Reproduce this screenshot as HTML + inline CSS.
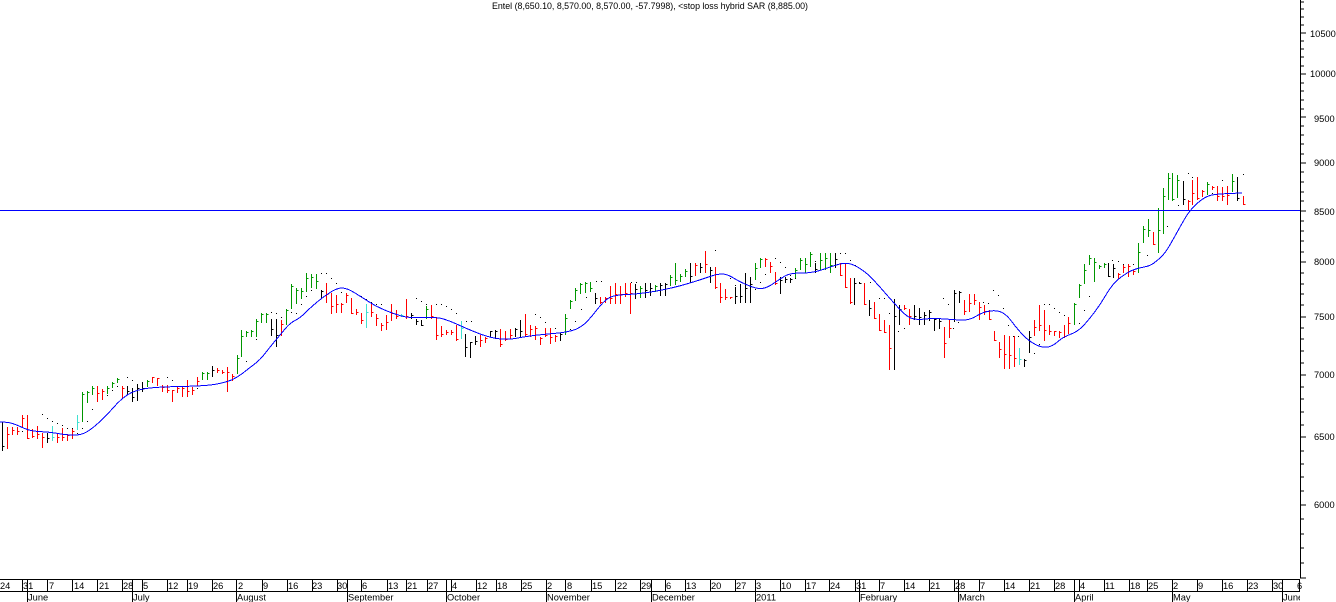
<!DOCTYPE html>
<html><head><meta charset="utf-8"><style>
html,body{margin:0;padding:0;background:#fff;width:1336px;height:602px;overflow:hidden}
svg{display:block}
text{font-family:"Liberation Sans",Arial,sans-serif;font-size:9.3px;fill:#000}
.b{fill:none;stroke-width:1;shape-rendering:crispEdges}
</style></head><body>
<svg width="1336" height="602" viewBox="0 0 1336 602" xmlns="http://www.w3.org/2000/svg">
<rect width="1336" height="602" fill="#fff"/>
<text x="492" y="9" font-size="9.3" textLength="316" lengthAdjust="spacingAndGlyphs">Entel (8,650.10, 8,570.00, 8,570.00, -57.7998), &lt;stop loss hybrid SAR (8,885.00)</text>
<path class="b" transform="translate(-.5,.5)" stroke="#000" d="M122.5 386h1M117.5 386h1M112.5 390h1M107.5 395h1M42.5 414h1M47.5 418h1M52.5 421h1M57.5 423h1M62.5 425h1M67.5 428h1M72.5 428h1M77.5 433h1M82.5 428h1M87.5 421h1M92.5 409h1M22.5 431h1M127.5 377h1M132.5 380h1M137.5 384h1M167.5 377h1M172.5 380h1M197.5 388h1M202.5 385h1M212.5 376h1M246.5 361h1M256.5 339h1M271.5 312h1M276.5 313h1M281.5 317h1M291.5 312h1M296.5 313h1M301.5 304h1M306.5 296h1M311.5 290h1M321.5 273h1M326.5 273h1M331.5 278h1M336.5 283h1M341.5 292h1M346.5 299h1M361.5 296h1M366.5 299h1M371.5 302h1M376.5 304h1M381.5 304h1M391.5 320h1M416.5 298h1M421.5 301h1M426.5 304h1M436.5 304h1M441.5 304h1M446.5 306h1M451.5 309h1M456.5 313h1M466.5 321h1M471.5 321h1M535.5 314h1M540.5 317h1M545.5 322h1M555.5 328h1M570.5 329h1M575.5 321h1M581.5 309h1M586.5 297h1M596.5 281h1M601.5 281h1M631.5 282h1M636.5 282h1M675.5 280h1M715.5 250h1M730.5 278h1M735.5 285h1M740.5 288h1M755.5 289h1M760.5 282h1M765.5 274h1M775.5 258h1M780.5 262h1M785.5 267h1M790.5 275h1M795.5 278h1M805.5 272h1M810.5 264h1M815.5 261h1M840.5 253h1M845.5 253h1M850.5 260h1M855.5 265h1M870.5 282h1M879.5 298h1M884.5 298h1M889.5 313h1M894.5 315h1M898.5 331h1M904.5 328h1M943.5 298h1M948.5 304h1M953.5 328h1M958.5 322h1M983.5 302h1M988.5 303h1M993.5 290h1M998.5 295h1M1003.5 308h1M1008.5 325h1M1013.5 336h1M1018.5 336h1M1024.5 336h1M1034.5 353h1M1039.5 344h1M1044.5 304h1M1049.5 304h1M1054.5 308h1M1059.5 312h1M1064.5 315h1M1079.5 323h1M1084.5 310h1M1089.5 296h1M1094.5 281h1M1112.5 260h1M1118.5 261h1M1123.5 264h1M1128.5 264h1M1133.5 264h1M1147.5 255h1M1167.5 226h1M1178.5 205h1M1183.5 200h1M1188.5 173h1M1192.5 177h1M1212.5 193h1M1217.5 199h1M1222.5 180h1M1237.5 199h1M1243.5 174h1"/>
<path class="b" stroke="#009600" d="M82.5 392V422M82.5 394.5h2M87.5 391V403M87.5 392.5h2M92.5 386V395M92.5 388.5h2M107.5 386V394M107.5 388.5h2M112.5 382V388M112.5 383.5h2M117.5 378V383M117.5 379.5h2M147.5 380V387M147.5 381.5h2M202.5 372V380M202.5 373.5h2M207.5 372V380M207.5 373.5h2M237.5 355V374M237.5 358.5h2M241.5 330V357M241.5 336.5h2M246.5 331V337M246.5 332.5h2M251.5 330V337M251.5 331.5h2M256.5 319V337M256.5 321.5h2M261.5 313V323M261.5 314.5h2M266.5 313V323M266.5 314.5h2M286.5 309V325M286.5 310.5h2M291.5 284V309M291.5 286.5h2M296.5 288V304M296.5 290.5h2M301.5 288V299M301.5 291.5h2M306.5 273V292M306.5 278.5h2M311.5 274V288M311.5 277.5h2M316.5 274V289M316.5 281.5h2M426.5 306V319M426.5 309.5h2M565.5 314V335M565.5 318.5h2M570.5 300V309M570.5 301.5h2M575.5 288V301M575.5 290.5h2M580.5 283V294M580.5 284.5h2M585.5 282V293M585.5 283.5h2M590.5 282V292M590.5 288.5h2M640.5 286V298M640.5 288.5h2M655.5 285V292M655.5 286.5h2M670.5 275V286M670.5 277.5h2M675.5 263V285M675.5 280.5h2M680.5 274V282M680.5 276.5h2M685.5 269V277M685.5 271.5h2M755.5 263V280M755.5 268.5h2M760.5 258V268M760.5 259.5h2M795.5 268V278M795.5 270.5h2M800.5 258V270M800.5 260.5h2M805.5 258V273M805.5 264.5h2M810.5 252V267M810.5 254.5h2M820.5 253V270M820.5 260.5h2M825.5 253V270M825.5 258.5h2M830.5 253V273M830.5 265.5h2M1074.5 303V325M1074.5 304.5h2M1079.5 284V298M1079.5 285.5h2M1084.5 264V284M1084.5 270.5h2M1089.5 255V265M1089.5 258.5h2M1094.5 258V282M1094.5 262.5h2M1099.5 265V269M1099.5 266.5h2M1104.5 263V268M1104.5 264.5h2M1138.5 243V273M1138.5 252.5h2M1143.5 226V243M1143.5 229.5h2M1148.5 219V237M1148.5 230.5h2M1158.5 208V253M1158.5 230.5h2M1163.5 188V234M1163.5 196.5h2M1168.5 173V200M1168.5 178.5h2M1172.5 173V201M1172.5 199.5h2M1177.5 175V198M1177.5 180.5h2M1207.5 182V195M1207.5 184.5h2M1232.5 174V192M1232.5 181.5h2"/>
<path class="b" stroke="#f00" d="M7.5 427V449M7.5 434.5h2M12.5 427V435M12.5 430.5h2M17.5 427V435M17.5 431.5h2M22.5 415V428M22.5 418.5h2M27.5 415V439M27.5 438.5h2M32.5 429V438M32.5 436.5h2M37.5 426V439M37.5 434.5h2M42.5 433V448M42.5 437.5h2M57.5 433V443M57.5 437.5h2M62.5 428V441M62.5 437.5h2M67.5 434V441M67.5 435.5h2M72.5 429V439M72.5 431.5h2M97.5 386V402M97.5 393.5h2M102.5 389V400M102.5 391.5h2M122.5 386V399M122.5 388.5h2M152.5 377V383M152.5 377.5h2M157.5 378V386M157.5 378.5h2M162.5 385V392M162.5 387.5h2M167.5 385V393M167.5 390.5h2M172.5 390V402M172.5 390.5h2M177.5 386V393M177.5 388.5h2M182.5 386V397M182.5 388.5h2M187.5 380V397M187.5 391.5h2M192.5 387V395M192.5 390.5h2M197.5 377V386M197.5 381.5h2M217.5 368V373M217.5 370.5h2M222.5 370V374M222.5 372.5h2M227.5 367V392M227.5 372.5h2M232.5 374V381M232.5 376.5h2M281.5 320V336M281.5 324.5h2M326.5 283V303M326.5 294.5h2M331.5 293V314M331.5 306.5h2M336.5 295V313M336.5 304.5h2M341.5 303V313M341.5 304.5h2M346.5 293V303M346.5 295.5h2M351.5 298V314M351.5 313.5h2M356.5 309V315M356.5 312.5h2M361.5 313V324M361.5 320.5h2M371.5 304V317M371.5 312.5h2M376.5 314V326M376.5 318.5h2M381.5 323V331M381.5 325.5h2M386.5 315V330M386.5 322.5h2M391.5 304V321M391.5 313.5h2M396.5 310V319M396.5 316.5h2M406.5 299V319M406.5 316.5h2M431.5 305V319M431.5 316.5h2M436.5 317V340M436.5 335.5h2M441.5 326V337M441.5 334.5h2M446.5 330V335M446.5 332.5h2M451.5 330V335M451.5 332.5h2M456.5 325V341M456.5 339.5h2M480.5 335V347M480.5 340.5h2M485.5 337V343M485.5 338.5h2M500.5 329V347M500.5 344.5h2M505.5 331V341M505.5 339.5h2M510.5 329V339M510.5 335.5h2M525.5 314V337M525.5 334.5h2M530.5 325V337M530.5 329.5h2M535.5 326V340M535.5 328.5h2M540.5 337V345M540.5 338.5h2M545.5 328V337M545.5 335.5h2M550.5 328V344M550.5 337.5h2M555.5 335V342M555.5 336.5h2M600.5 297V304M600.5 302.5h2M605.5 297V303M605.5 298.5h2M610.5 286V304M610.5 298.5h2M615.5 283V304M615.5 294.5h2M620.5 286V304M620.5 294.5h2M625.5 283V297M625.5 293.5h2M630.5 283V314M630.5 293.5h2M695.5 263V276M695.5 265.5h2M705.5 251V273M705.5 264.5h2M715.5 267V289M715.5 287.5h2M720.5 283V303M720.5 297.5h2M725.5 289V300M725.5 297.5h2M730.5 297V299M730.5 297.5h2M765.5 258V267M765.5 259.5h2M770.5 262V273M770.5 266.5h2M775.5 272V285M775.5 283.5h2M840.5 263V276M840.5 275.5h2M845.5 263V288M845.5 287.5h2M850.5 278V304M850.5 302.5h2M864.5 283V305M864.5 304.5h2M874.5 302V319M874.5 318.5h2M879.5 314V331M879.5 330.5h2M884.5 320V333M884.5 332.5h2M889.5 325V370M889.5 348.5h2M904.5 305V310M904.5 308.5h2M909.5 309V325M909.5 316.5h2M944.5 327V358M944.5 343.5h2M949.5 319V338M949.5 328.5h2M964.5 300V315M964.5 311.5h2M969.5 294V312M969.5 303.5h2M974.5 294V305M974.5 300.5h2M979.5 302V320M979.5 307.5h2M984.5 305V315M984.5 311.5h2M989.5 310V320M989.5 319.5h2M994.5 331V341M994.5 340.5h2M999.5 342V358M999.5 349.5h2M1004.5 335V369M1004.5 354.5h2M1009.5 336V369M1009.5 355.5h2M1014.5 336V367M1014.5 358.5h2M1034.5 320V336M1034.5 327.5h2M1039.5 305V331M1039.5 325.5h2M1044.5 310V341M1044.5 330.5h2M1049.5 325V335M1049.5 331.5h2M1054.5 331V336M1054.5 331.5h2M1059.5 331V338M1059.5 332.5h2M1064.5 325V338M1064.5 336.5h2M1068.5 317V334M1068.5 323.5h2M1118.5 273V279M1118.5 274.5h2M1123.5 265V273M1123.5 267.5h2M1128.5 264V277M1128.5 266.5h2M1133.5 270V275M1133.5 271.5h2M1153.5 232V245M1153.5 244.5h2M1188.5 200V210M1188.5 201.5h2M1192.5 180V205M1192.5 193.5h2M1197.5 177V200M1197.5 198.5h2M1202.5 190V197M1202.5 191.5h2M1212.5 186V190M1212.5 187.5h2M1217.5 186V201M1217.5 196.5h2M1222.5 187V201M1222.5 196.5h2M1227.5 186V205M1227.5 195.5h2M1243.5 196V205M1243.5 204.5h2"/>
<path class="b" stroke="#000" d="M2.5 422V451M2.5 446.5h2M47.5 433V443M47.5 438.5h2M127.5 386V395M127.5 391.5h2M132.5 388V402M132.5 397.5h2M137.5 384V401M137.5 388.5h2M142.5 382V392M142.5 388.5h2M212.5 366V377M212.5 370.5h2M271.5 319V336M271.5 329.5h2M276.5 319V347M276.5 335.5h2M321.5 290V299M321.5 291.5h2M411.5 313V319M411.5 315.5h2M416.5 319V325M416.5 321.5h2M421.5 320V326M421.5 325.5h2M465.5 334V357M465.5 347.5h2M470.5 342V358M470.5 342.5h2M475.5 336V345M475.5 341.5h2M490.5 331V337M490.5 331.5h2M495.5 330V339M495.5 331.5h2M515.5 328V337M515.5 329.5h2M520.5 320V337M520.5 331.5h2M560.5 333V341M560.5 334.5h2M595.5 293V304M595.5 298.5h2M635.5 284V299M635.5 289.5h2M645.5 283V298M645.5 290.5h2M650.5 283V296M650.5 288.5h2M660.5 283V296M660.5 285.5h2M665.5 283V296M665.5 284.5h2M690.5 263V283M690.5 276.5h2M700.5 263V273M700.5 267.5h2M710.5 267V283M710.5 270.5h2M735.5 287V304M735.5 296.5h2M740.5 284V303M740.5 296.5h2M745.5 273V303M745.5 288.5h2M750.5 277V303M750.5 284.5h2M780.5 277V294M780.5 280.5h2M785.5 277V283M785.5 279.5h2M790.5 278V283M790.5 279.5h2M815.5 263V273M815.5 269.5h2M835.5 253V268M835.5 259.5h2M854.5 278V305M854.5 283.5h2M859.5 282V284M859.5 283.5h2M869.5 300V316M869.5 308.5h2M894.5 299V370M894.5 316.5h2M899.5 305V325M899.5 309.5h2M914.5 305V320M914.5 316.5h2M919.5 308V325M919.5 317.5h2M924.5 312V325M924.5 315.5h2M929.5 310V321M929.5 312.5h2M934.5 318V331M934.5 319.5h2M939.5 319V329M939.5 321.5h2M954.5 290V322M954.5 293.5h2M959.5 291V303M959.5 292.5h2M1024.5 359V367M1024.5 360.5h2M1029.5 331V353M1029.5 337.5h2M1108.5 263V277M1108.5 276.5h2M1113.5 264V278M1113.5 268.5h2M1183.5 181V205M1183.5 199.5h2M1237.5 177V201M1237.5 198.5h2"/>
<path class="b" stroke="#40e0d0" d="M52.5 426V441M52.5 437.5h2M77.5 415V430M77.5 422.5h2M366.5 304V328M366.5 312.5h2M401.5 314V317M401.5 315.5h2M461.5 321V339M461.5 328.5h2M1019.5 348V365M1019.5 359.5h2"/>
<path class="b" stroke="#0000ff" d="M0 422Q8 422 12.5 423.5Q17 425 23.5 428Q30 431 38.5 431.5Q47 432 51 432.5Q55 433 61 434Q67 435 74.5 435Q82 435 87.5 431.5Q93 428 100 421.5Q107 415 113.5 407.5Q120 400 126.5 395.5Q133 391 143 389Q153 387 180 386.5Q207 386 217 384Q227 382 232.5 379.5Q238 377 243 373Q248 369 254 364.5Q260 360 265 353.5Q270 347 275 341Q280 335 285 329Q290 323 295 320.5Q300 318 305 313Q310 308 316.5 302.5Q323 297 330 292.5Q337 288 342 288Q347 288 355 293Q363 298 370 302.5Q377 307 387 311Q397 315 403.5 316.5Q410 318 423.5 317.5Q437 317 443.5 319Q450 321 456.5 324Q463 327 475 332Q487 337 497 338.5Q507 340 515 338.5Q523 337 530 336Q537 335 553.5 333.5Q570 332 576.5 329Q583 326 588 320.5Q593 315 598 308.5Q603 302 608 298.5Q613 295 626.5 294.5Q640 294 656.5 291Q673 288 686.5 284Q700 280 708.5 277Q717 274 722 274Q727 274 733.5 278Q740 282 748.5 285.5Q757 289 762 288.5Q767 288 773.5 283.5Q780 279 785 276Q790 273 801.5 273Q813 273 823 269.5Q833 266 838 264.5Q843 263 848 263.5Q853 264 860 268.5Q867 273 873.5 280Q880 287 886.5 294.5Q893 302 900 309.5Q907 317 912 318.5Q917 320 925 319Q933 318 945 319Q957 320 963.5 320Q970 320 976.5 316Q983 312 990 311Q997 310 1002 312.5Q1007 315 1012.5 322.5Q1018 330 1024 336Q1030 342 1036.5 345Q1043 348 1048 347Q1053 346 1058 341.5Q1063 337 1070 334.5Q1077 332 1082 327Q1087 322 1093.5 313.5Q1100 305 1106.5 294Q1113 283 1120.5 277.5Q1128 272 1133 270Q1138 268 1144 267Q1150 266 1154 263Q1158 260 1161.5 256.5Q1165 253 1167.5 249Q1170 245 1175 236Q1180 227 1184 220Q1188 213 1192.5 208Q1197 203 1202 199.5Q1207 196 1212 195Q1217 194 1229.5 193.5L1242 193"/>
<path class="b" stroke="#0000ff" d="M0 210.5H1300"/>
<path class="b" stroke="#000" stroke-width="1" d="M0 579.5H1300M0 591.5H1300M1300.5 0V578M1300 578H1306M1300 2H1304M1300 9H1304M1300 17H1304M1300 25H1304M1300 33H1306M1300 41H1304M1300 49H1304M1300 57H1304M1300 66H1304M1300 74H1306M1300 83H1304M1300 91H1304M1300 100H1304M1300 109H1304M1300 117H1306M1300 126H1304M1300 135H1304M1300 144H1304M1300 154H1304M1300 163H1306M1300 172H1304M1300 182H1304M1300 192H1304M1300 201H1304M1300 211H1306M1300 221H1304M1300 231H1304M1300 241H1304M1300 252H1304M1300 262H1306M1300 273H1304M1300 284H1304M1300 294H1304M1300 305H1304M1300 317H1306M1300 328H1304M1300 339H1304M1300 351H1304M1300 363H1304M1300 375H1306M1300 387H1304M1300 399H1304M1300 412H1304M1300 425H1304M1300 437H1306M1300 451H1304M1300 464H1304M1300 477H1304M1300 491H1304M1300 505H1306M1300 519H1304M1300 534H1304M1300 548H1304M1300 563H1304"/>
<path class="b" stroke="#000" d="M22.5 579V591M27.5 579V602M47.5 579V591M72.5 579V591M97.5 579V591M122.5 579V591M132.5 579V602M142.5 579V591M167.5 579V591M187.5 579V591M212.5 579V591M236.5 579V602M262.5 579V591M287.5 579V591M312.5 579V591M337.5 579V591M347.5 579V602M361.5 579V591M387.5 579V591M406.5 579V591M427.5 579V591M446.5 579V602M451.5 579V591M476.5 579V591M496.5 579V591M521.5 579V591M546.5 579V602M565.5 579V591M591.5 579V591M615.5 579V591M640.5 579V591M651.5 579V602M665.5 579V591M685.5 579V591M710.5 579V591M735.5 579V591M755.5 579V602M780.5 579V591M805.5 579V591M829.5 579V591M855.5 579V591M859.5 579V602M879.5 579V591M904.5 579V591M929.5 579V591M954.5 579V591M958.5 579V602M979.5 579V591M1004.5 579V591M1029.5 579V591M1054.5 579V591M1074.5 579V602M1079.5 579V591M1104.5 579V591M1129.5 579V591M1147.5 579V591M1172.5 579V602M1197.5 579V591M1222.5 579V591M1247.5 579V591M1272.5 579V591M1282.5 579V602M1299.5 579V591"/>
<g>
<text x="1310" y="37">10500</text><text x="1310" y="77">10000</text><text x="1314" y="122">9500</text><text x="1314" y="166">9000</text><text x="1314" y="215">8500</text><text x="1314" y="265">8000</text><text x="1314" y="320">7500</text><text x="1314" y="378">7000</text><text x="1314" y="440">6500</text><text x="1314" y="508">6000</text>
</g>
<g>
<text x="0" y="589">24</text><text x="23" y="589">31</text><text x="49" y="589">7</text><text x="74" y="589">14</text><text x="99" y="589">21</text><text x="123" y="589">28</text><text x="143" y="589">5</text><text x="168" y="589">12</text><text x="188" y="589">19</text><text x="213" y="589">26</text><text x="238" y="589">2</text><text x="263" y="589">9</text><text x="288" y="589">16</text><text x="312" y="589">23</text><text x="337" y="589">30</text><text x="362" y="589">6</text><text x="388" y="589">13</text><text x="407" y="589">21</text><text x="428" y="589">27</text><text x="452" y="589">4</text><text x="477" y="589">12</text><text x="497" y="589">18</text><text x="522" y="589">25</text><text x="547" y="589">2</text><text x="567" y="589">8</text><text x="592" y="589">15</text><text x="617" y="589">22</text><text x="641" y="589">29</text><text x="666" y="589">6</text><text x="686" y="589">13</text><text x="711" y="589">20</text><text x="736" y="589">27</text><text x="756" y="589">3</text><text x="781" y="589">10</text><text x="806" y="589">17</text><text x="830" y="589">24</text><text x="856" y="589">31</text><text x="880" y="589">7</text><text x="905" y="589">14</text><text x="930" y="589">21</text><text x="955" y="589">28</text><text x="980" y="589">7</text><text x="1005" y="589">14</text><text x="1030" y="589">21</text><text x="1055" y="589">28</text><text x="1080" y="589">4</text><text x="1105" y="589">11</text><text x="1130" y="589">18</text><text x="1148" y="589">25</text><text x="1173" y="589">2</text><text x="1198" y="589">9</text><text x="1223" y="589">16</text><text x="1248" y="589">23</text><text x="1273" y="589">30</text><text x="1297" y="589">6</text>
<text x="28" y="600.5">June</text><text x="133" y="600.5">July</text><text x="237" y="600.5">August</text><text x="348" y="600.5">September</text><text x="447" y="600.5">October</text><text x="547" y="600.5">November</text><text x="652" y="600.5">December</text><text x="756" y="600.5">2011</text><text x="860" y="600.5">February</text><text x="959" y="600.5">March</text><text x="1075" y="600.5">April</text><text x="1173" y="600.5">May</text>
</g>
<svg x="1283" y="592" width="17" height="10"><text x="0" y="8.5">June</text></svg>
</svg>
</body></html>
